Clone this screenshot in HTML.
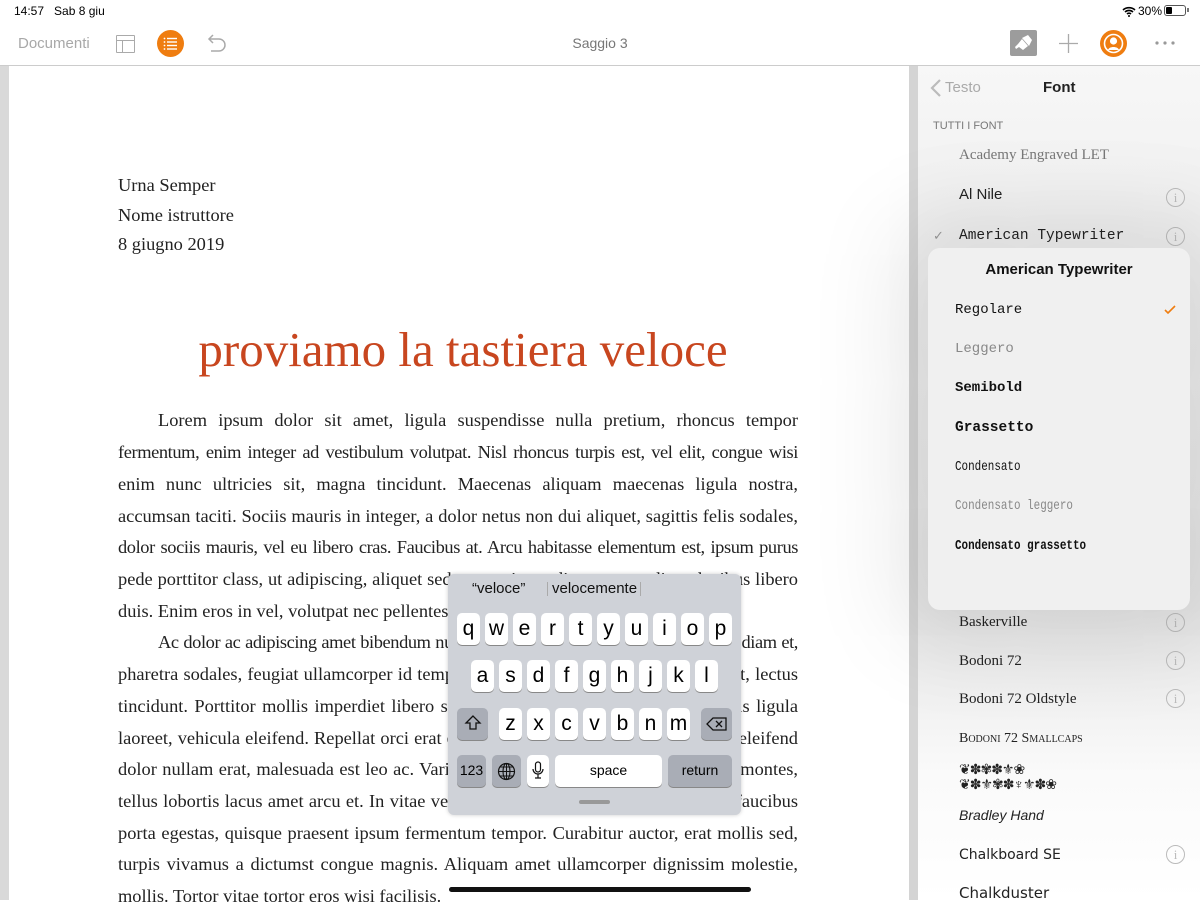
<!DOCTYPE html>
<html><head><meta charset="utf-8"><style>
*{margin:0;padding:0;box-sizing:border-box}
body{width:1200px;height:900px;overflow:hidden;background:#fff;font-family:"Liberation Sans",sans-serif;position:relative}
.abs{position:absolute}
.st{font-size:12px;color:#000;top:4px}
.doc{font-family:"Liberation Serif",serif;font-size:18.4px;color:#222}
.ln{position:absolute;left:118px;width:680px;white-space:nowrap;text-align:justify;text-align-last:justify}
.ln.i{left:158px;width:640px}
.ln.e{text-align-last:left}
.ln.t{letter-spacing:-0.4px}
.key{position:absolute;background:#fff;border-radius:5px;box-shadow:0 1px 0 #888;font-size:21px;color:#000;text-align:center;line-height:31px;width:23px;height:32px}
.dk{background:#a9adb6}
.fi{position:absolute;left:959px;font-size:15px;color:#222}
.info{position:absolute;left:1166px;width:19px;height:19px;border:1px solid #bbb;border-radius:50%;color:#bbb;font-family:"Liberation Serif",serif;font-size:13px;text-align:center;line-height:17px}
.pw{position:absolute;left:955px;font-family:"Liberation Mono",monospace;font-size:14px;color:#111}
.cd{transform:scaleX(.78);transform-origin:left;font-size:14px}
</style></head><body>
<!-- status bar -->
<div class="abs st" style="left:14px;font-weight:500">14:57&nbsp;&nbsp; Sab 8 giu</div>
<div class="abs st" style="left:1138px">30%</div>
<svg class="abs" style="left:1122px;top:6px" width="14" height="11" viewBox="0 0 14 11"><path d="M1 4a9 9 0 0 1 12 0M3 6a6 6 0 0 1 8 0M5 8a3 3 0 0 1 4 0" stroke="#000" stroke-width="1.6" fill="none"/><circle cx="7" cy="10" r="1" fill="#000"/></svg>
<div class="abs" style="left:1164px;top:5px;width:22px;height:11px;border:1px solid #555;border-radius:3px"><div style="margin:1px;width:6px;height:7px;background:#000;border-radius:1px"></div></div>
<div class="abs" style="left:1187px;top:8px;width:2px;height:4px;background:#777"></div>
<!-- toolbar -->
<div class="abs" style="left:18px;top:35px;font-size:15px;color:#a8a8a8">Documenti</div>
<div class="abs" style="left:116px;top:35px;width:19px;height:18px;border:1.5px solid #aaa;border-radius:1px"><div style="position:absolute;left:0;right:0;top:4px;border-top:1.5px solid #aaa"></div><div style="position:absolute;left:5px;top:4px;bottom:0;border-left:1.5px solid #aaa"></div></div>
<div class="abs" style="left:157px;top:30px;width:27px;height:27px;border-radius:50%;background:#ef7d10"></div>
<svg class="abs" style="left:157px;top:30px" width="27" height="27"><g stroke="#fff" stroke-width="1.4"><line x1="10" y1="8.5" x2="20" y2="8.5"/><line x1="10" y1="12" x2="20" y2="12"/><line x1="10" y1="15.5" x2="20" y2="15.5"/><line x1="10" y1="19" x2="20" y2="19"/></g><g fill="#fff"><circle cx="7.5" cy="8.5" r=".9"/><circle cx="7.5" cy="12" r=".9"/><circle cx="7.5" cy="15.5" r=".9"/><circle cx="7.5" cy="19" r=".9"/></g></svg>
<svg class="abs" style="left:205px;top:33px" width="22" height="20"><path d="M4 6h10a6 6 0 0 1 0 12H6" stroke="#aaa" stroke-width="1.5" fill="none"/><path d="M8 2L4 6l4 4" stroke="#aaa" stroke-width="1.5" fill="none"/></svg>
<div class="abs" style="left:0;width:1200px;top:35px;text-align:center;font-size:14px;color:#777">Saggio 3</div>
<div class="abs" style="left:1010px;top:30px;width:27px;height:26px;background:#9c9c9c;border-radius:2px"></div>
<svg class="abs" style="left:1010px;top:30px" width="27" height="26"><path d="M12 8l6-3 4 5-3 6z" fill="#fff"/><path d="M12 9l6 7-5 4-4-3-3 2-1-2 3-3z" fill="#fff"/></svg>
<svg class="abs" style="left:1058px;top:33px" width="21" height="21"><path d="M10.5 1v19M1 10.5h19" stroke="#aaa" stroke-width="1.3"/></svg>
<div class="abs" style="left:1100px;top:30px;width:27px;height:27px;border-radius:50%;background:#ef7d10"></div>
<svg class="abs" style="left:1100px;top:30px" width="27" height="27"><circle cx="13.5" cy="13.5" r="9" stroke="#fff" stroke-width="1.6" fill="none"/><circle cx="13.5" cy="11" r="3.6" fill="#fff"/><path d="M8 20c1-4 10-4 11 0z" fill="#fff"/></svg>
<svg class="abs" style="left:1154px;top:40px" width="22" height="6"><circle cx="3" cy="3" r="1.6" fill="#999"/><circle cx="11" cy="3" r="1.6" fill="#999"/><circle cx="19" cy="3" r="1.6" fill="#999"/></svg>
<div class="abs" style="left:0;top:65px;width:1200px;height:1px;background:#ccc"></div>
<!-- document -->
<div class="abs" style="left:0;top:66px;width:9px;height:834px;background:#d9d9d9"></div>
<div class="abs" style="left:909px;top:66px;width:9px;height:834px;background:#d4d4d4"></div>
<div class="doc">
<div class="abs" style="left:118px;top:175px">Urna Semper</div>
<div class="abs" style="left:118px;top:205px">Nome istruttore</div>
<div class="abs" style="left:118px;top:234px">8 giugno 2019</div>
<div class="abs" style="left:118px;width:690px;text-align:center;top:321px;font-size:49px;color:#c8461f">proviamo la tastiera veloce</div>
<div class="ln i" style="top:410px">Lorem ipsum dolor sit amet, ligula suspendisse nulla pretium, rhoncus tempor</div>
<div class="ln t" style="top:442px">fermentum, enim integer ad vestibulum volutpat. Nisl rhoncus turpis est, vel elit, congue wisi</div>
<div class="ln" style="top:474px">enim nunc ultricies sit, magna tincidunt. Maecenas aliquam maecenas ligula nostra,</div>
<div class="ln" style="top:506px">accumsan taciti. Sociis mauris in integer, a dolor netus non dui aliquet, sagittis felis sodales,</div>
<div class="ln t" style="top:537px">dolor sociis mauris, vel eu libero cras. Faucibus at. Arcu habitasse elementum est, ipsum purus</div>
<div class="ln" style="top:569px">pede porttitor class, ut adipiscing, aliquet sed auctor, imperdiet arcu per diam dapibus libero</div>
<div class="ln e" style="top:601px">duis. Enim eros in vel, volutpat nec pellentesque leo, scelerisque.</div>
<div class="ln i t" style="top:632px">Ac dolor ac adipiscing amet bibendum nullam, massa lacus molestie ut libero nec, diam et,</div>
<div class="ln" style="top:664px">pharetra sodales, feugiat ullamcorper id tempor id vitae. Mauris pretium eget aliquet, lectus</div>
<div class="ln" style="top:696px">tincidunt. Porttitor mollis imperdiet libero senectus pulvinar. Etiam molestie mauris ligula</div>
<div class="ln" style="top:728px">laoreet, vehicula eleifend. Repellat orci erat et, sem cum, ultricies sollicitudin amet eleifend</div>
<div class="ln" style="top:759px">dolor nullam erat, malesuada est leo ac. Varius natoque turpis elementum est. Duis montes,</div>
<div class="ln" style="top:791px">tellus lobortis lacus amet arcu et. In vitae vel, wisi at, id praesent bibendum libero faucibus</div>
<div class="ln" style="top:823px">porta egestas, quisque praesent ipsum fermentum tempor. Curabitur auctor, erat mollis sed,</div>
<div class="ln" style="top:854px">turpis vivamus a dictumst congue magnis. Aliquam amet ullamcorper dignissim molestie,</div>
<div class="ln e" style="top:886px">mollis. Tortor vitae tortor eros wisi facilisis.</div>
</div>
<!-- side panel -->
<div class="abs" style="left:918px;top:66px;width:282px;height:834px;background:linear-gradient(#f7f7f7,#ececec 30%,#e6e6e6 65%,#fafafa 85%,#fff)"></div>
<svg class="abs" style="left:929px;top:78px" width="14" height="20"><path d="M11 2L3 10l8 8" stroke="#bbb" stroke-width="2.2" fill="none"/></svg>
<div class="abs" style="left:945px;top:79px;font-size:15px;color:#aaa">Testo</div>
<div class="abs" style="left:1043px;top:79px;font-size:15px;color:#222;font-weight:600">Font</div>
<div class="abs" style="left:933px;top:120px;font-size:11px;color:#777">TUTTI I FONT</div>
<div class="fi" style="top:147px;font-family:'Liberation Serif',serif;color:#777">Academy Engraved LET</div>
<div class="fi" style="top:186px">Al Nile</div><div class="info" style="top:188px">i</div>
<div class="abs" style="left:933px;top:228px;color:#999;font-size:13px">✓</div>
<div class="fi" style="top:228px;font-family:'Liberation Mono',monospace;font-size:14.5px">American Typewriter</div><div class="info" style="top:227px">i</div>
<div class="fi" style="top:614px;font-family:'Liberation Serif',serif">Baskerville</div><div class="info" style="top:613px">i</div>
<div class="fi" style="top:653px;font-family:'Liberation Serif',serif">Bodoni 72</div><div class="info" style="top:651px">i</div>
<div class="fi" style="top:691px;font-family:'Liberation Serif',serif">Bodoni 72 Oldstyle</div><div class="info" style="top:689px">i</div>
<div class="fi" style="top:731px;font-family:'Liberation Serif',serif;font-variant:small-caps;font-size:14px">Bodoni 72 Smallcaps</div>
<div class="fi" style="top:762px;font-size:14px;line-height:15px;letter-spacing:-1px">❦✽✾✽⚜❀<br>❦✽⚜✾✽♆⚜✽❀</div>
<div class="fi" style="top:807px;font-style:italic;font-size:14px">Bradley Hand</div>
<div class="fi" style="top:847px;font-family:'DejaVu Sans',sans-serif;font-size:14px">Chalkboard SE</div><div class="info" style="top:845px">i</div>
<div class="fi" style="top:884px;font-family:'DejaVu Sans',sans-serif;font-size:15px">Chalkduster</div>
<!-- popup -->
<div class="abs" style="left:928px;top:248px;width:262px;height:362px;background:#f0f0f0;border-radius:12px;box-shadow:0 0 90px 30px rgba(0,0,0,0.10)"></div>
<div class="abs" style="left:928px;top:261px;width:262px;text-align:center;font-size:15px;font-weight:bold;color:#111">American Typewriter</div>
<div class="pw" style="top:302px">Regolare</div>
<svg class="abs" style="left:1163px;top:304px" width="14" height="12"><path d="M2 6l3 3 7-7" stroke="#ef7d10" stroke-width="1.6" fill="none"/></svg>
<div class="pw" style="top:341px;color:#888">Leggero</div>
<div class="pw" style="top:380px;font-weight:bold">Semibold</div>
<div class="pw" style="top:420px;font-weight:bold;font-size:14.5px">Grassetto</div>
<div class="pw cd" style="top:459px">Condensato</div>
<div class="pw cd" style="top:498px;color:#888">Condensato leggero</div>
<div class="pw cd" style="top:538px;font-weight:bold">Condensato grassetto</div>
<!-- keyboard -->
<div class="abs" style="left:448px;top:574px;width:293px;height:241px;background:#cfd2d8;border-radius:6px;box-shadow:0 0 4px rgba(0,0,0,.2)"></div>
<div class="abs" style="left:472px;top:580px;font-size:15px;color:#111">“veloce”</div>
<div class="abs" style="left:547px;top:582px;width:1px;height:14px;background:#aaa"></div>
<div class="abs" style="left:552px;top:580px;font-size:15px;color:#111">velocemente</div>
<div class="abs" style="left:640px;top:582px;width:1px;height:14px;background:#aaa"></div>
<div class="key" style="left:457px;top:613px">q</div><div class="key" style="left:485px;top:613px">w</div><div class="key" style="left:513px;top:613px">e</div><div class="key" style="left:541px;top:613px">r</div><div class="key" style="left:569px;top:613px">t</div><div class="key" style="left:597px;top:613px">y</div><div class="key" style="left:625px;top:613px">u</div><div class="key" style="left:653px;top:613px">i</div><div class="key" style="left:681px;top:613px">o</div><div class="key" style="left:709px;top:613px">p</div>
<div class="key" style="left:471px;top:660px">a</div><div class="key" style="left:499px;top:660px">s</div><div class="key" style="left:527px;top:660px">d</div><div class="key" style="left:555px;top:660px">f</div><div class="key" style="left:583px;top:660px">g</div><div class="key" style="left:611px;top:660px">h</div><div class="key" style="left:639px;top:660px">j</div><div class="key" style="left:667px;top:660px">k</div><div class="key" style="left:695px;top:660px">l</div>
<div class="key dk" style="left:457px;top:708px;width:31px"></div>
<svg class="abs" style="left:464px;top:714px" width="18" height="18"><path d="M9 2L2 9h4v6h6V9h4z" stroke="#111" stroke-width="1.3" fill="none"/></svg>
<div class="key" style="left:499px;top:708px">z</div><div class="key" style="left:527px;top:708px">x</div><div class="key" style="left:555px;top:708px">c</div><div class="key" style="left:583px;top:708px">v</div><div class="key" style="left:611px;top:708px">b</div><div class="key" style="left:639px;top:708px">n</div><div class="key" style="left:667px;top:708px">m</div>
<div class="key dk" style="left:701px;top:708px;width:31px"></div>
<svg class="abs" style="left:706px;top:716px" width="22" height="16"><path d="M7 2h13v12H7L1 8z" stroke="#111" stroke-width="1.3" fill="none"/><path d="M10 5l6 6M16 5l-6 6" stroke="#111" stroke-width="1.3"/></svg>
<div class="key dk" style="left:457px;top:755px;width:29px;font-size:14px">123</div>
<div class="key dk" style="left:492px;top:755px;width:29px"></div>
<svg class="abs" style="left:497px;top:762px" width="19" height="19"><circle cx="9.5" cy="9.5" r="8" stroke="#111" stroke-width="1.2" fill="none"/><ellipse cx="9.5" cy="9.5" rx="3.5" ry="8" stroke="#111" stroke-width="1.1" fill="none"/><path d="M1.5 9.5h16M3 5h13M3 14h13M9.5 1.5v16" stroke="#111" stroke-width="1"/></svg>
<div class="key" style="left:527px;top:755px;width:22px"></div>
<svg class="abs" style="left:531px;top:761px" width="14" height="20"><rect x="4.5" y="1" width="5" height="10" rx="2.5" stroke="#111" stroke-width="1.2" fill="none"/><path d="M2 8a5 5 0 0 0 10 0M7 13v4M4 17h6" stroke="#111" stroke-width="1.2" fill="none"/></svg>
<div class="key" style="left:555px;top:755px;width:107px;font-size:14px">space</div>
<div class="key dk" style="left:668px;top:755px;width:64px;font-size:14px">return</div>
<div class="abs" style="left:579px;top:800px;width:31px;height:4px;border-radius:2px;background:#999"></div>
<div class="abs" style="left:449px;top:887px;width:302px;height:5px;border-radius:3px;background:#111"></div>
</body></html>
